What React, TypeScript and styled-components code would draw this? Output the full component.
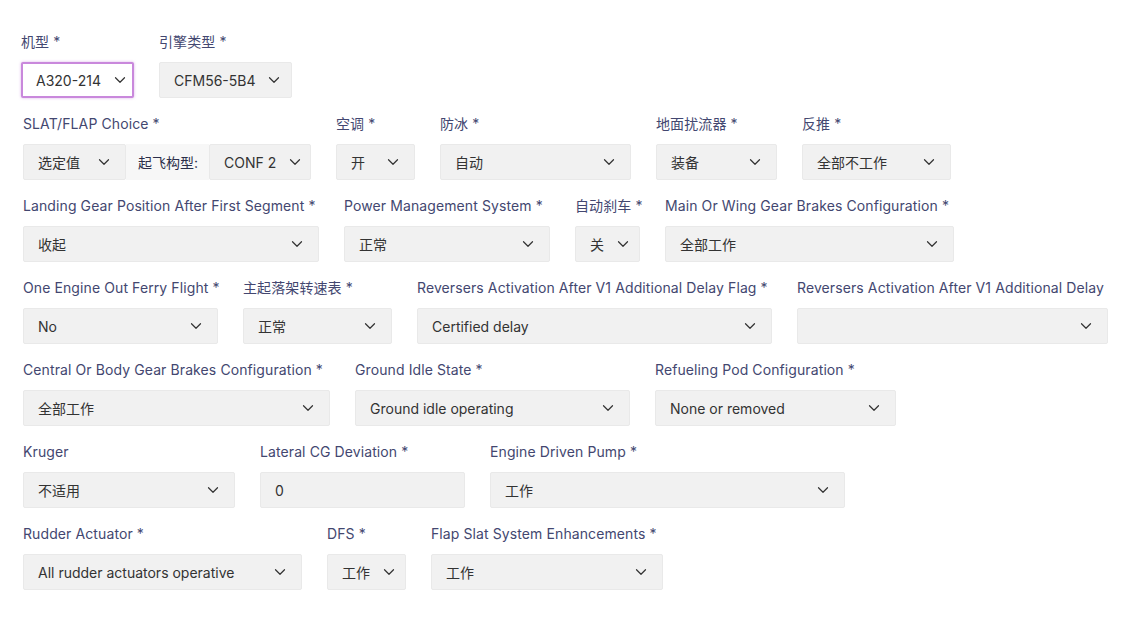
import React from "react";
import styled, { createGlobalStyle, css } from "styled-components";
import { ChevronDown } from "lucide-react";

const GlobalStyle = createGlobalStyle`
  body {
    margin: 0;
    background: #fff;
    font-family: Inter, "Noto Sans CJK SC", sans-serif;
  }
`;

const Form = styled.div`
  padding: 32px 0 0 23px;
`;

const Row = styled.div<{ $shift?: number }>`
  display: flex;
  gap: 25px;
  margin-bottom: 16px;
  margin-left: ${({ $shift }) => $shift || 0}px;
`;

const Field = styled.div<{ $w: number }>`
  display: flex;
  flex-direction: column;
  width: ${({ $w }) => $w}px;
`;

const Label = styled.label`
  font-size: 14px;
  line-height: 20px;
  color: #434770;
  white-space: nowrap;
  margin-bottom: 10px;
  letter-spacing: 0.1px;
`;

const boxBase = css`
  box-sizing: border-box;
  height: 36px;
  background: #f1f1f1;
  border: 1px solid #e9e9e9;
  border-radius: 2px;
  font-size: 14px;
  color: #333;
`;

const SelectBox = styled.div<{ $focused?: boolean; $w?: number }>`
  ${boxBase}
  display: flex;
  align-items: center;
  justify-content: space-between;
  gap: 10px;
  padding: 0 12px 0 14px;
  ${({ $w }) => $w && `width: ${$w}px; flex: none;`}
  ${({ $focused }) =>
    $focused &&
    css`
      background: #fff;
      border: 2px solid #c988dc;
      box-shadow: 0 0 3px rgba(196, 127, 217, 0.6);
      padding: 0 11px 0 13px;
    `}
  svg {
    flex: none;
    color: #333;
  }
`;

const Value = styled.span`
  white-space: nowrap;
`;

const TextInput = styled.div`
  ${boxBase}
  display: flex;
  align-items: center;
  padding: 0 14px;
`;

const Group = styled.div`
  display: flex;
  height: 36px;
`;

const Addon = styled.div`
  box-sizing: border-box;
  width: 83px;
  height: 36px;
  display: flex;
  align-items: center;
  padding-left: 12px;
  background: #f7f7f7;
  font-size: 14px;
  color: #2c2f4a;
  white-space: nowrap;
`;

const Select = ({ value, focused, w }: { value: string; focused?: boolean; w?: number }) => (
  <SelectBox $focused={focused} $w={w}>
    <Value>{value}</Value>
    <ChevronDown size={18} strokeWidth={1.6} />
  </SelectBox>
);

type F = { label: string; w: number; value?: string; input?: boolean };

const rows: F[][] = [
  [
    { label: "SLAT/FLAP Choice *", w: 288 },
    { label: "空调 *", w: 79, value: "开" },
    { label: "防冰 *", w: 191, value: "自动" },
    { label: "地面扰流器 *", w: 121, value: "装备" },
    { label: "反推 *", w: 149, value: "全部不工作" },
  ],
  [
    { label: "Landing Gear Position After First Segment *", w: 296, value: "收起" },
    { label: "Power Management System *", w: 206, value: "正常" },
    { label: "自动刹车 *", w: 65, value: "关" },
    { label: "Main Or Wing Gear Brakes Configuration *", w: 289, value: "全部工作" },
  ],
  [
    { label: "One Engine Out Ferry Flight *", w: 195, value: "No" },
    { label: "主起落架转速表 *", w: 149, value: "正常" },
    { label: "Reversers Activation After V1 Additional Delay Flag *", w: 355, value: "Certified delay" },
    { label: "Reversers Activation After V1 Additional Delay", w: 311, value: "" },
  ],
  [
    { label: "Central Or Body Gear Brakes Configuration *", w: 307, value: "全部工作" },
    { label: "Ground Idle State *", w: 275, value: "Ground idle operating" },
    { label: "Refueling Pod Configuration *", w: 241, value: "None or removed" },
  ],
  [
    { label: "Kruger", w: 212, value: "不适用" },
    { label: "Lateral CG Deviation *", w: 205, value: "0", input: true },
    { label: "Engine Driven Pump *", w: 355, value: "工作" },
  ],
  [
    { label: "Rudder Actuator *", w: 279, value: "All rudder actuators operative" },
    { label: "DFS *", w: 79, value: "工作" },
    { label: "Flap Slat System Enhancements *", w: 232, value: "工作" },
  ],
];

export default function App() {
  return (
    <>
      <GlobalStyle />
      <Form>
        <Row $shift={-2}>
          <Field $w={113}>
            <Label>机型 *</Label>
            <Select value="A320-214" focused />
          </Field>
          <Field $w={133}>
            <Label>引擎类型 *</Label>
            <Select value="CFM56-5B4" />
          </Field>
        </Row>
        {rows.map((row, i) => (
          <Row key={i}>
            {row.map((f) => (
              <Field key={f.label} $w={f.w}>
                <Label>{f.label}</Label>
                {f.label.startsWith("SLAT") ? (
                  <Group>
                    <Select value="选定值" w={103} />
                    <Addon>起飞构型:</Addon>
                    <Select value="CONF 2" w={102} />
                  </Group>
                ) : f.input ? (
                  <TextInput>{f.value}</TextInput>
                ) : (
                  <Select value={f.value || ""} />
                )}
              </Field>
            ))}
          </Row>
        ))}
      </Form>
    </>
  );
}
